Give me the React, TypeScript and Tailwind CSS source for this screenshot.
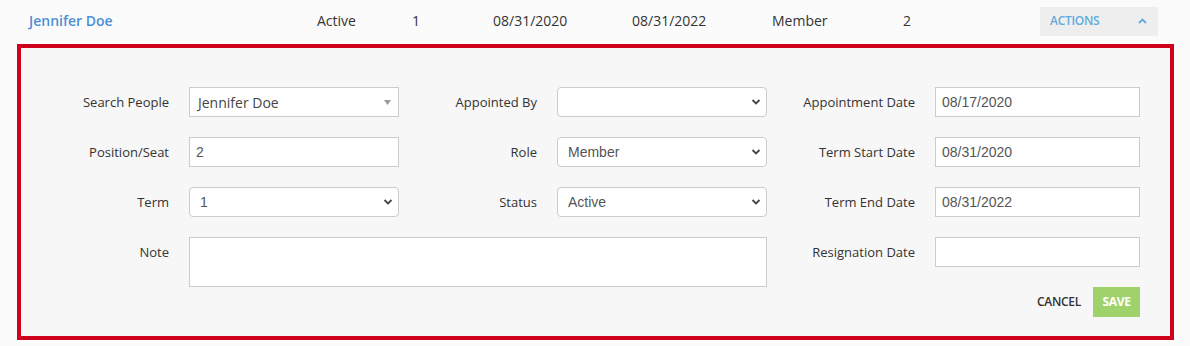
import React from 'react';

const font = { fontFamily: '"Open Sans", "Liberation Sans", sans-serif' };

function Label({ children }: { children: React.ReactNode }) {
  return (
    <div className="flex h-[30px] items-center justify-end pt-[2px] text-[13px] text-[#333]">{children}</div>
  );
}

function TextInput({ value }: { value: string }) {
  return (
    <input
      readOnly
      value={value}
      className="h-[30px] w-full border border-[#ccc] bg-white px-[6px] text-[14px] text-[#555] outline-none [font-family:'Liberation_Sans',Arial,sans-serif]"
    />
  );
}

function Chevron() {
  return (
    <svg className="pointer-events-none absolute right-[6px] top-[11px]" width="10" height="8" viewBox="0 0 10 8">
      <path d="M1.5 2 L5 5.5 L8.5 2" fill="none" stroke="#444" strokeWidth="1.8" />
    </svg>
  );
}

function Select({ value }: { value: string }) {
  return (
    <div className="relative h-[30px] w-full">
      <div className="flex h-[30px] w-full items-center rounded-[4px] border border-[#ccc] bg-white px-[10px] text-[14px] text-[#555] [font-family:'Liberation_Sans',Arial,sans-serif]">
        {value}
      </div>
      <Chevron />
    </div>
  );
}

export default function App() {
  return (
    <div className="h-[346px] w-[1190px] bg-[#fbfbfb]" style={font}>
      {/* member row */}
      <div className="flex h-[44px] items-center pl-[29px] text-[14px] text-[#333]">
        <div className="w-[288px] pb-[4px] font-semibold text-[#4a8fd8]">Jennifer Doe</div>
        <div className="w-[95px] pb-[4px]">Active</div>
        <div className="w-[81px] pb-[4px]">1</div>
        <div className="w-[139px] pb-[4px]">08/31/2020</div>
        <div className="w-[140px] pb-[4px]">08/31/2022</div>
        <div className="w-[131px] pb-[4px]">Member</div>
        <div className="w-[137px] pb-[4px]">2</div>
        <div className="mb-[2px] flex h-[29px] w-[118px] items-center justify-between bg-[#eeeeee] pl-[10px] pr-[11px] text-[12px] font-semibold tracking-[-0.3px] text-[#62aadd]">
          <span>ACTIONS</span>
          <svg width="9" height="6" viewBox="0 0 9 6">
            <path d="M1 5 L4.5 1.5 L8 5" fill="none" stroke="#62aadd" strokeWidth="1.8" />
          </svg>
        </div>
      </div>

      {/* edit panel */}
      <div className="ml-[17px] w-[1157px] border-[4px] border-[#d0021b] bg-[#f7f7f7] pb-[19px] pl-[20px] pt-[39px]">
        <div className="grid grid-cols-[128px_210px_118px_210px_128px_205px] gap-x-5 gap-y-5">
          <Label>Search People</Label>
          <div className="relative h-[30px]">
            <div className="flex h-[30px] items-center border border-[#ccc] bg-white pl-[8px] text-[14px] text-[#444]">
              Jennifer Doe
            </div>
            <svg className="absolute right-[8px] top-[13px]" width="7" height="5" viewBox="0 0 7 5">
              <path d="M0 0 L7 0 L3.5 5 Z" fill="#999" />
            </svg>
          </div>
          <Label>Appointed By</Label>
          <Select value="" />
          <Label>Appointment Date</Label>
          <TextInput value="08/17/2020" />

          <Label>Position/Seat</Label>
          <TextInput value="2" />
          <Label>Role</Label>
          <Select value="Member" />
          <Label>Term Start Date</Label>
          <TextInput value="08/31/2020" />

          <Label>Term</Label>
          <Select value="1" />
          <Label>Status</Label>
          <Select value="Active" />
          <Label>Term End Date</Label>
          <TextInput value="08/31/2022" />

          <Label>Note</Label>
          <div className="col-span-3 row-span-2 self-start">
            <textarea readOnly className="block h-[50px] w-full resize-none border border-[#ccc] bg-white outline-none" />
          </div>
          <Label>Resignation Date</Label>
          <TextInput value="" />

          <div className="col-span-2 col-start-5 flex h-[30px] items-center justify-end">
            <button className="mr-[12px] text-[12px] font-semibold tracking-[-0.3px] text-[#333]">CANCEL</button>
            <button className="flex h-[30px] w-[47px] items-center justify-center bg-[#9fd26a] text-[12px] font-bold tracking-[-0.3px] text-white">
              SAVE
            </button>
          </div>
        </div>
      </div>
    </div>
  );
}
